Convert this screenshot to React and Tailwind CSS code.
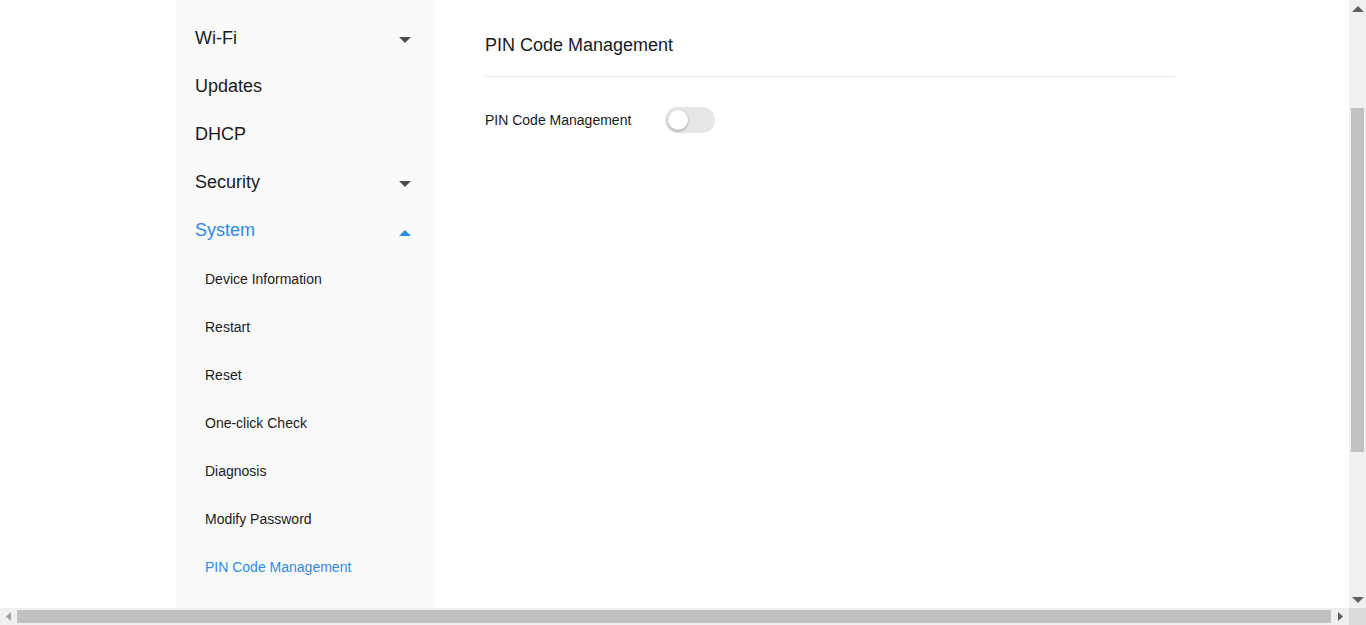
const Caret = ({ up, color, className = '' }) => (
  <svg width="12" height="6" viewBox="0 0 12 6" className={`shrink-0 ${className}`}>
    <path d={up ? 'M0 6 L6 0 L12 6 Z' : 'M0 0 L12 0 L6 6 Z'} fill={color} />
  </svg>
);

const topItems = [
  { label: 'Wi-Fi', caret: 'down' },
  { label: 'Updates' },
  { label: 'DHCP' },
  { label: 'Security', caret: 'down' },
  { label: 'System', caret: 'up', active: true },
];

const subItems = [
  'Device Information',
  'Restart',
  'Reset',
  'One-click Check',
  'Diagnosis',
  'Modify Password',
  'PIN Code Management',
];

const Sidebar = () => (
  <aside className="ml-[176px] w-[260px] shrink-0 bg-[#fafafa] pt-[14px] flex flex-col">
    {topItems.map((item) => (
      <div
        key={item.label}
        className={`h-[48px] flex items-center justify-between pl-[19px] pr-[25px] text-[18px] ${
          item.active ? 'text-[#2f8ae6]' : 'text-[#1a1a1a]'
        }`}
      >
        <span>{item.label}</span>
        {item.caret && (
          <Caret
            up={item.caret === 'up'}
            color={item.active ? '#2f8ae6' : '#4a4a4a'}
            className={item.caret === 'up' ? 'translate-y-[3px]' : 'translate-y-[2px]'}
          />
        )}
      </div>
    ))}
    <div className="h-[1px]" />
    {subItems.map((label, i) => (
      <div
        key={label}
        className={`h-[48px] flex items-center pl-[29px] text-[14px] ${
          i === subItems.length - 1 ? 'text-[#2f8ae6]' : 'text-[#1a1a1a]'
        }`}
      >
        {label}
      </div>
    ))}
  </aside>
);

const Toggle = () => (
  <div className="w-[50px] h-[26px] rounded-full bg-[#e6e6e6] flex items-center px-[3px]">
    <div className="w-[20px] h-[20px] rounded-full bg-white shadow-[0_1px_3px_rgba(0,0,0,0.35)]" />
  </div>
);

const Main = () => (
  <main className="ml-[49px] w-[690px] shrink-0">
    <div className="pt-[31px] pb-[17px] border-b border-[#e8e8e8] text-[18px] leading-[28px] text-[#1a1a1a]">
      PIN Code Management
    </div>
    <div className="mt-[30px] flex items-center h-[26px]">
      <span className="w-[180px] text-[14px] text-[#1a1a1a]">PIN Code Management</span>
      <Toggle />
    </div>
  </main>
);

export default function App() {
  return (
    <div
      className="w-[1366px] h-[625px] overflow-hidden flex flex-col bg-white"
      style={{ fontFamily: '"Liberation Sans", Arial, sans-serif' }}
    >
      <div className="flex flex-1 min-h-0">
        <div className="flex flex-1 min-w-0">
          <Sidebar />
          <Main />
        </div>
        {/* vertical scrollbar */}
        <div className="w-[17px] shrink-0 bg-[#f0f0f0] flex flex-col items-center">
          <div className="h-[17px] flex items-center justify-center">
            <Caret up color="#606060" />
          </div>
          <div className="mt-[91px] w-[13px] h-[344px] bg-[#c1c1c1]" />
          <div className="flex-1" />
          <div className="h-[17px] flex items-center justify-center">
            <Caret color="#606060" />
          </div>
        </div>
      </div>
      {/* horizontal scrollbar */}
      <div className="h-[17px] shrink-0 flex bg-[#f0f0f0]">
        <div className="w-[17px] flex items-center justify-center">
          <svg width="5" height="9" viewBox="0 0 5 9"><path d="M5 0 L0 4.5 L5 9 Z" fill="#a0a0a0" /></svg>
        </div>
        <div className="flex-1 flex items-center">
          <div className="w-full h-[13px] bg-[#c1c1c1]" />
        </div>
        <div className="w-[18px] flex items-center justify-center">
          <svg width="5" height="9" viewBox="0 0 5 9"><path d="M0 0 L5 4.5 L0 9 Z" fill="#606060" /></svg>
        </div>
        <div className="w-[17px] bg-[#dcdcdc]" />
      </div>
    </div>
  );
}
